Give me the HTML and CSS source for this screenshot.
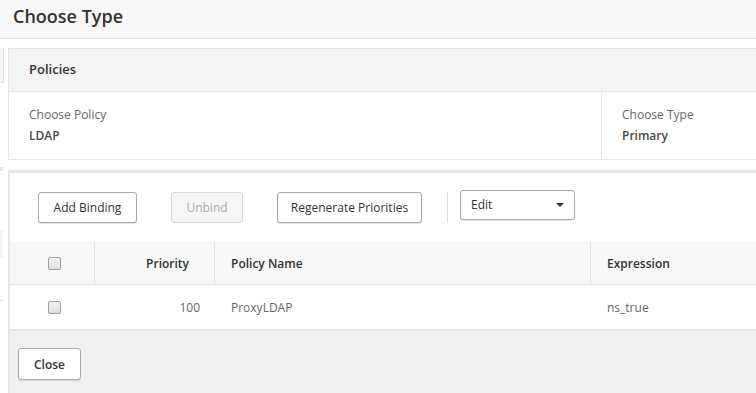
FILE: index.html
```html
<!DOCTYPE html>
<html>
<head>
<meta charset="utf-8">
<link rel="stylesheet" href="styles.css">
</head>
<body>
<div class="topbar"><h1 class="title">Choose Type</h1></div>
<div class="page">
  <div class="edge">
    <div class="edge-box"></div>
    <div class="edge-line"></div>
    <div class="edge-fill"></div>
    <div class="edge-line2"></div>
  </div>
  <div class="main">
    <section class="panel">
      <div class="panel-head">Policies</div>
      <div class="panel-row">
        <div class="field field-policy">
          <div class="label">Choose Policy</div>
          <div class="value">LDAP</div>
        </div>
        <div class="field field-type">
          <div class="label">Choose Type</div>
          <div class="value">Primary</div>
        </div>
      </div>
    </section>
    <section class="binding">
      <div class="toolbar">
        <button class="btn btn-add">Add Binding</button>
        <button class="btn btn-disabled">Unbind</button>
        <button class="btn btn-regen">Regenerate Priorities</button>
        <span class="sep"></span>
        <div class="select"><span>Edit</span><span class="caret"></span></div>
      </div>
      <div class="table">
        <div class="tr th">
          <div class="td c-check"><span class="cb"></span></div>
          <div class="td c-prio">Priority</div>
          <div class="td c-name">Policy Name</div>
          <div class="td c-expr">Expression</div>
        </div>
        <div class="tr row">
          <div class="td c-check"><span class="cb"></span></div>
          <div class="td c-prio">100</div>
          <div class="td c-name">ProxyLDAP</div>
          <div class="td c-expr">ns_true</div>
        </div>
      </div>
      <div class="footer">
        <button class="btn btn-close">Close</button>
      </div>
    </section>
  </div>
</div>
</body>
</html>
```
FILE: styles.css
```css
html, body {
  margin: 0;
  padding: 0;
  overflow: hidden;
  background: #fff;
  font-family: "Open Sans", "Noto Sans", sans-serif;
  color: #333;
}
.topbar {
  height: 38px;
  background: #f7f7f7;
  border-bottom: 1px solid #e4e4e4;
  display: flex;
  align-items: center;
}
.title {
  margin: 0 0 0 13px;
  font-size: 18px;
  font-weight: 600;
  color: #333;
  line-height: 1;
  position: relative;
  top: -3px;
}
.page {
  display: flex;
  height: 354px;
}
.edge {
  width: 8px;
  flex: none;
  display: flex;
  flex-direction: column;
}
.edge-box {
  margin-top: 9px;
  width: 3px;
  height: 34px;
  background: #f4f4f4;
  border-right: 1px solid #e2e2e2;
  border-bottom: 1px solid #e2e2e2;
}
.edge-line {
  margin-top: 84px;
  width: 3px;
  height: 4px;
  background: #e6e6e6;
}
.edge-fill {
  margin-top: 59px;
  width: 3px;
  height: 28px;
  background: #f4f4f4;
}
.edge-line2 {
  margin-top: 42px;
  width: 3px;
  height: 1px;
  background: #e2e2e2;
}
.main {
  width: 820px;
  flex: none;
  padding-top: 9px;
}
.panel {
  border: 1px solid #e4e4e4;
  border-right: none;
}
.panel-head {
  height: 43px;
  background: #f4f4f4;
  border-bottom: 1px solid #e4e4e4;
  display: flex;
  align-items: center;
  padding: 0 0 3px 20px;
  box-sizing: border-box;
  font-size: 13px;
  font-weight: 600;
  color: #333;
}
.panel-row {
  display: flex;
  height: 67px;
}
.field {
  padding: 14px 20px 0;
}
.field-policy {
  width: 552px;
  border-right: 1px solid #e4e4e4;
}
.label {
  font-size: 12px;
  color: #666;
  line-height: 18px;
}
.value {
  font-size: 12px;
  font-weight: 600;
  color: #4a4a4a;
  line-height: 18px;
  margin-top: 3px;
}
.binding {
  margin-top: 10px;
  border-top: 3px solid #e6e6e6;
  border-left: 2px solid #e6e6e6;
}
.toolbar {
  height: 69px;
  display: flex;
  align-items: flex-start;
  padding: 19px 0 0 28px;
  box-sizing: border-box;
}
.btn {
  font-family: "Open Sans", "Noto Sans", sans-serif;
  font-size: 12px;
  color: #333;
  background: #fff;
  border: 1px solid #a9a9a9;
  border-radius: 3px;
  box-shadow: 0 1px 1px rgba(0,0,0,0.12);
  height: 31px;
  padding: 0;
  margin: 0;
}
.btn-add { width: 99px; }
.btn-disabled {
  width: 72px;
  margin-left: 34px;
  background: #f6f6f6;
  border-color: #d6d6d6;
  color: #a8a8a8;
  box-shadow: none;
}
.btn-regen {
  width: 145px;
  margin-left: 34px;
}
.sep {
  width: 1px;
  height: 31px;
  background: #dcdcdc;
  margin-left: 25px;
}
.select {
  margin-left: 12px;
  margin-top: -2px;
  width: 115px;
  height: 30px;
  border: 1px solid #a9a9a9;
  border-radius: 3px;
  box-shadow: 0 1px 1px rgba(0,0,0,0.1);
  display: flex;
  align-items: center;
  justify-content: space-between;
  padding: 0 10px 0 10px;
  box-sizing: border-box;
  font-size: 12px;
  color: #333;
}
.select span:first-child { position: relative; top: -1px; }
.caret {
  width: 0;
  height: 0;
  border-left: 4px solid transparent;
  border-right: 4px solid transparent;
  border-top: 4px solid #333;
}
.tr {
  display: flex;
  font-size: 12px;
}
.th {
  height: 42px;
  background: #f7f7f7;
  border-bottom: 1px solid #e4e4e4;
  font-weight: 600;
  color: #333;
}
.row {
  height: 44px;
  border-bottom: 2px solid #e6e6e6;
  color: #666;
}
.td {
  display: flex;
  align-items: center;
  box-sizing: border-box;
}
.c-check {
  width: 85px;
  justify-content: center;
  padding-left: 4px;
}
.th .c-check, .th .c-prio, .th .c-name {
  border-right: 1px solid #e4e4e4;
}
.c-prio {
  width: 120px;
  justify-content: flex-end;
  padding-right: 15px;
}
.th .c-prio { padding-right: 25px; }
.c-name {
  width: 376px;
  padding-left: 16px;
}
.c-expr {
  padding-left: 16px;
}
.cb {
  width: 11px;
  height: 11px;
  border: 1px solid #a0a0a0;
  border-radius: 2px;
  background: linear-gradient(#f4f4f4, #dedede);
}
.footer {
  height: 62px;
  background: #f1f1f1;
  padding: 17px 0 0 8px;
  box-sizing: border-box;
}
.btn-close {
  width: 63px;
  font-weight: 600;
  height: 32px;
}
```
